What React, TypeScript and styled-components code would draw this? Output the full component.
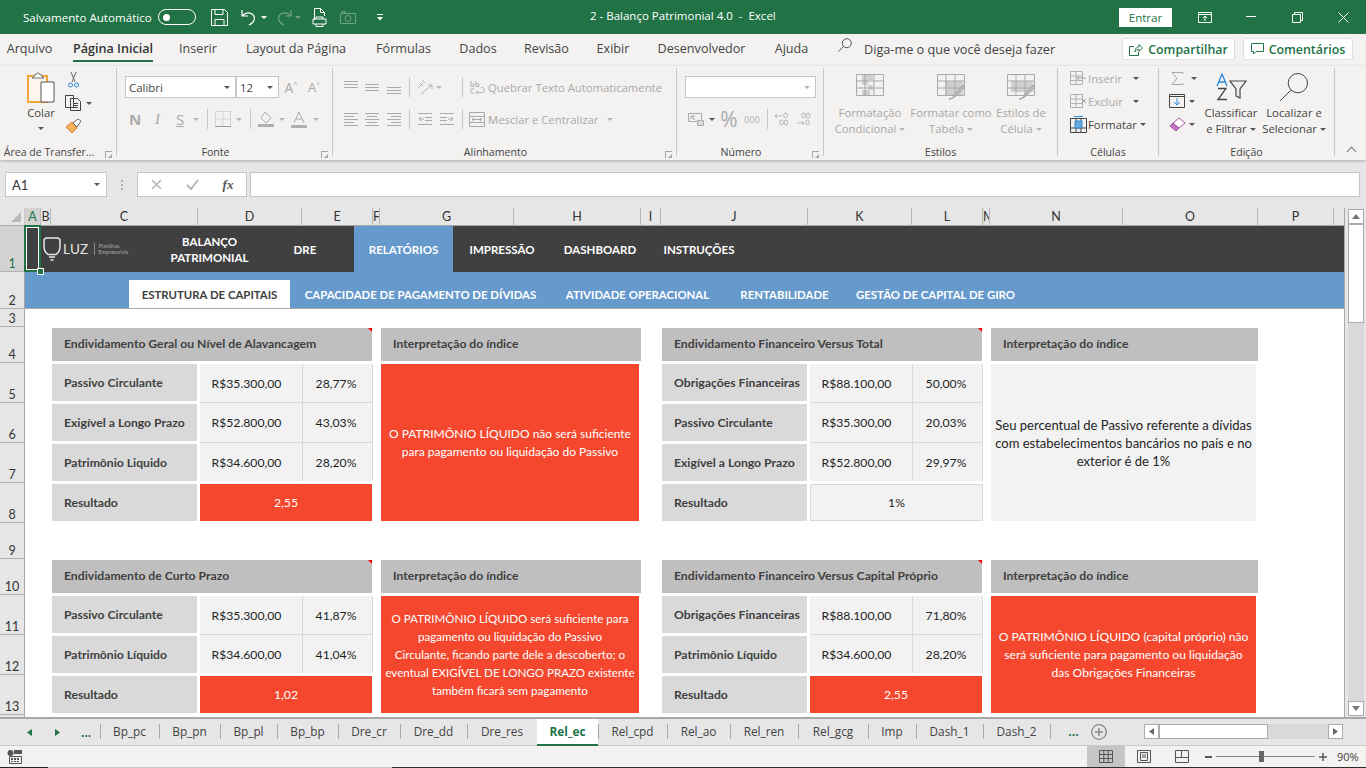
import React from "react";
import styled, { createGlobalStyle } from "styled-components";

const UI = `"Open Sans", "Noto Sans", sans-serif`;
const CELL = `Lato, "Liberation Sans", sans-serif`;

const DARK = "#404040";
const GREEN = "#217346";
const RED = "#f4472e";

const Global = createGlobalStyle`
  html, body { margin: 0; padding: 0; background: #e6e6e6; overflow: hidden; }
  * { box-sizing: border-box; }
  svg { display: block; flex: none; }
`;

const Page = styled.div`
  width: 1366px;
  height: 768px;
  display: flex;
  flex-direction: column;
  overflow: hidden;
  font-family: ${UI};
`;

/* title bar */
const TitleBar = styled.header`
  height: 34px;
  flex: none;
  background: ${GREEN};
  color: #fff;
  display: flex;
  align-items: center;
  position: relative;
  padding-left: 23px;
`;
const AutoSave = styled.span`
  font-size: 11.6px;
  width: 135px;
  white-space: nowrap;
`;
const Toggle = styled.span`
  width: 38px;
  height: 16px;
  border: 1.5px solid #fff;
  border-radius: 8px;
  display: flex;
  align-items: center;
  padding-left: 4px;
  margin-right: 15px;
  &::before {
    content: "";
    width: 7px;
    height: 7px;
    border-radius: 50%;
    background: #fff;
  }
`;
const Slot = styled.span<{ $w: number; $dim?: boolean }>`
  width: ${(p) => p.$w}px;
  flex: none;
  display: flex;
  align-items: center;
  justify-content: center;
  opacity: ${(p) => (p.$dim ? 0.35 : 1)};
`;
const DocTitle = styled.div`
  position: absolute;
  left: 590px;
  top: 8px;
  font-size: 11.5px;
  white-space: pre;
`;
const TitleRight = styled.div`
  margin-left: auto;
  display: flex;
  align-items: center;
`;
const SignIn = styled.button`
  width: 53px;
  height: 19px;
  border: 0;
  padding: 0;
  background: #fff;
  color: ${GREEN};
  font: 11.6px ${UI};
  margin-right: 10px;
`;

/* menu tabs */
const MenuBar = styled.nav`
  height: 32px;
  flex: none;
  background: #f3f2f1;
  display: flex;
  align-items: flex-start;
  padding-top: 4px;
`;
const MenuTab = styled.span<{ $w: number; $on?: boolean }>`
  width: ${(p) => p.$w}px;
  flex: none;
  display: flex;
  justify-content: center;
  font-size: 12.6px;
  line-height: 22px;
  height: 24px;
  color: #444;
  white-space: nowrap;
  & > b {
    font-weight: ${(p) => (p.$on ? 600 : 400)};
    color: ${(p) => (p.$on ? "#333" : "#444")};
    border-bottom: 2px solid ${(p) => (p.$on ? GREEN : "transparent")};
    height: 24px;
  }
`;
const TellMe = styled.span`
  font-size: 12.7px;
  line-height: 22px;
  color: #444;
  margin-left: 12px;
  width: 258px;
  white-space: nowrap;
`;
const ShareBtn = styled.span<{ $w: number }>`
  width: ${(p) => p.$w}px;
  height: 22px;
  flex: none;
  background: #fff;
  border: 1px solid #e1dfdd;
  border-radius: 2px;
  display: flex;
  align-items: center;
  justify-content: center;
  gap: 5px;
  margin-right: 8px;
  color: ${GREEN};
  font-size: 12.4px;
  font-weight: 600;
`;

/* ribbon */
const Ribbon = styled.section`
  height: 94px;
  flex: none;
  background: #f3f2f1;
  display: flex;
  align-items: flex-start;
  padding-top: 2px;
  box-shadow: 0 1px 3px rgba(0, 0, 0, 0.25);
  position: relative;
  z-index: 2;
`;
const Group = styled.div<{ $w: number }>`
  width: ${(p) => p.$w}px;
  height: 88px;
  flex: none;
  border-right: 1px solid #c8c6c4;
  display: flex;
  flex-direction: column;
  position: relative;
`;
const GroupBody = styled.div<{ $left?: number; $top?: number }>`
  flex: 1;
  min-height: 0;
  display: flex;
  flex-direction: column;
  padding-left: ${(p) => p.$left ?? 8}px;
  padding-top: ${(p) => p.$top ?? 8}px;
`;
const Columns = styled(GroupBody)`
  flex-direction: row;
  align-items: flex-start;
`;
const Caption = styled.div<{ $launcher?: boolean }>`
  height: 16px;
  margin-bottom: -4px;
  text-align: center;
  font-size: 10.6px;
  line-height: 16px;
  color: #444;
  white-space: nowrap;
  padding-right: ${(p) => (p.$launcher ? 18 : 0)}px;
`;
const Launcher = styled.span`
  position: absolute;
  right: 4px;
  bottom: -2px;
  width: 7px;
  height: 7px;
  border-left: 1px solid #a8a8a8;
  border-top: 1px solid #a8a8a8;
  &::after {
    content: "";
    position: absolute;
    right: 0;
    bottom: 0;
    border: 2px solid transparent;
    border-right-color: #a8a8a8;
    border-bottom-color: #a8a8a8;
  }
`;
const ToolRow = styled.div<{ $mt?: number; $h?: number }>`
  display: flex;
  align-items: center;
  height: ${(p) => p.$h ?? 22}px;
  margin-top: ${(p) => p.$mt ?? 0}px;
`;
const Stack = styled.div<{ $w?: number }>`
  width: ${(p) => (p.$w ? `${p.$w}px` : "auto")};
  flex: none;
  display: flex;
  flex-direction: column;
`;
const Combo = styled.div<{ $w: number }>`
  width: ${(p) => p.$w}px;
  height: 22px;
  flex: none;
  background: #fff;
  border: 1px solid #c6c6c6;
  display: flex;
  align-items: center;
  padding: 0 5px 0 3px;
  font-family: ${UI};
  font-size: 11.4px;
  color: #444;
  & > span {
    flex: 1;
  }
`;
const Caret = styled.i<{ $light?: boolean; $m?: number; $top?: number }>`
  display: block;
  width: 0;
  height: 0;
  flex: none;
  margin-left: ${(p) => p.$m ?? 0}px;
  margin-top: ${(p) => p.$top ?? 0}px;
  border-left: 3px solid transparent;
  border-right: 3px solid transparent;
  border-top: 3px solid ${(p) => (p.$light ? "#b5b5b5" : "#555")};
`;
const VRule = styled.i<{ $w: number }>`
  width: ${(p) => p.$w}px;
  height: 20px;
  flex: none;
  position: relative;
  &::after {
    content: "";
    position: absolute;
    left: 50%;
    top: 0;
    bottom: 0;
    width: 1px;
    background: #c8c6c4;
  }
`;
const RibbonText = styled.span<{ $off?: boolean }>`
  font-size: 11.3px;
  white-space: nowrap;
  color: ${(p) => (p.$off ? "#a8a8a8" : "#444")};
`;
const BigTool = styled.div<{ $w: number; $off?: boolean }>`
  width: ${(p) => p.$w}px;
  flex: none;
  display: flex;
  flex-direction: column;
  align-items: center;
  color: ${(p) => (p.$off ? "#a8a8a8" : "#444")};
`;
const BigIcon = styled.div<{ $top?: number }>`
  height: 32px;
  margin-top: ${(p) => p.$top ?? 0}px;
  display: flex;
  align-items: center;
  justify-content: center;
`;
const BigLabel = styled.div`
  font-size: 11.3px;
  line-height: 16px;
  margin-top: 2px;
  text-align: center;
  white-space: nowrap;
  & i {
    display: inline-block;
    vertical-align: middle;
    margin-left: 3px;
  }
`;
const GlyphBtn = styled.span<{ $bold?: boolean; $italic?: boolean; $under?: boolean; $size?: number }>`
  font-family: ${(p) => (p.$italic ? `"Liberation Serif", serif` : UI)};
  font-size: ${(p) => p.$size ?? 15}px;
  font-weight: ${(p) => (p.$bold ? 700 : 400)};
  font-style: ${(p) => (p.$italic ? "italic" : "normal")};
  text-decoration: ${(p) => (p.$under ? "underline" : "none")};
  color: #ababab;
`;
const Chevron = styled.span`
  position: absolute;
  right: 11px;
  bottom: 5px;
  width: 7px;
  height: 7px;
  border-left: 1.5px solid #777;
  border-top: 1.5px solid #777;
  transform: rotate(45deg);
`;

/* formula bar */
const FormulaBar = styled.div`
  height: 48px;
  flex: none;
  background: #e6e6e6;
  display: flex;
  padding: 12px 6px 11px 5px;
  align-items: stretch;
`;
const NameBox = styled.div`
  width: 102px;
  background: #fff;
  border: 1px solid #c6c6c6;
  display: flex;
  align-items: center;
  justify-content: space-between;
  padding: 0 6px;
  font-family: ${CELL};
  font-size: 13px;
  color: #333;
`;
const Grip = styled.div`
  width: 30px;
  display: flex;
  flex-direction: column;
  align-items: center;
  justify-content: center;
  gap: 2px;
  & > i {
    width: 2px;
    height: 2px;
    background: #b0b0b0;
  }
`;
const FxBox = styled.div`
  width: 110px;
  background: #fff;
  border: 1px solid #c6c6c6;
  display: flex;
  align-items: center;
`;
const FxText = styled.span`
  font-family: "Liberation Serif", serif;
  font-style: italic;
  font-weight: 700;
  font-size: 13px;
  color: #555;
`;
const FormulaInput = styled.div`
  flex: 1;
  margin-left: 3px;
  background: #fff;
  border: 1px solid #c6c6c6;
`;

/* sheet */
const SheetArea = styled.div`
  height: 509px;
  flex: none;
  display: flex;
`;
const SheetGrid = styled.div`
  width: 1345px;
  height: 509px;
  flex: none;
  display: grid;
  grid-template-columns: 25px 16px 10px 147px 104px 71px 7px 134px 127px 20px 147px 104px 71px 7px 133px 135px 76px 11px;
  grid-template-rows: 18px 46px 37px 18px 36px 40px 40px 40px 40px 36px 36px 40px 40px 40px 40px;
  background: #fff;
  overflow: hidden;
  border-right: 1px solid #a8a8a8;
  position: relative;
`;
const Corner = styled.div`
  grid-column: 1;
  grid-row: 1;
  background: #e6e6e6;
  border-bottom: 1px solid #a8a8a8;
  border-right: 1px solid #c8c8c8;
  position: relative;
  &::after {
    content: "";
    position: absolute;
    right: 3px;
    bottom: 3px;
    border: 5px solid transparent;
    border-right-color: #b9b9b9;
    border-bottom-color: #b9b9b9;
  }
`;
const ColHead = styled.div<{ $c: number; $on?: boolean }>`
  grid-column: ${(p) => p.$c};
  grid-row: 1;
  background: ${(p) => (p.$on ? "#d2d2d2" : "#e6e6e6")};
  color: ${(p) => (p.$on ? GREEN : "#333")};
  border-bottom: 1px solid #a8a8a8;
  border-right: 1px solid #b8b8b8;
  font-family: ${CELL};
  font-size: 12.5px;
  line-height: 18px;
  text-align: center;
  overflow: hidden;
`;
const RowHead = styled.div<{ $r: number; $on?: boolean }>`
  grid-column: 1;
  grid-row: ${(p) => p.$r};
  background: ${(p) => (p.$on ? "#d2d2d2" : "#e6e6e6")};
  color: ${(p) => (p.$on ? GREEN : "#333")};
  border-bottom: 1px solid #b0b0b0;
  border-right: 1px solid #a8a8a8;
  font-family: ${CELL};
  font-size: 12.5px;
  display: flex;
  align-items: flex-end;
  justify-content: center;
  line-height: 15px;
`;
const NavBand = styled.div`
  grid-column: 2 / -1;
  grid-row: 2;
  background: ${DARK};
  display: flex;
  align-items: center;
  font-family: ${CELL};
`;
const Logo = styled.div`
  width: 138px;
  flex: none;
  display: flex;
  align-items: center;
  padding-left: 18px;
  color: #e6e6e6;
`;
const LogoWord = styled.span`
  font-size: 13.5px;
  letter-spacing: 0.3px;
  margin-left: 2px;
`;
const LogoNote = styled.span`
  font-size: 5.4px;
  line-height: 6px;
  color: #a9a9a9;
  border-left: 1px solid #8a8a8a;
  padding-left: 4px;
  margin-left: 5px;
  white-space: nowrap;
`;
const NavItem = styled.div<{ $w: number; $on?: boolean }>`
  width: ${(p) => p.$w}px;
  height: 100%;
  flex: none;
  display: flex;
  align-items: center;
  justify-content: center;
  text-align: center;
  padding-top: 2px;
  background: ${(p) => (p.$on ? "#6699cc" : "transparent")};
  color: #fff;
  font-weight: 700;
  font-size: 11.5px;
  line-height: 16px;
`;
const SubBand = styled.div`
  grid-column: 2 / -1;
  grid-row: 3;
  background: #6699cc;
  border-bottom: 1px solid #a8a8a8;
  display: flex;
  align-items: flex-end;
  padding-left: 104px;
  font-family: ${CELL};
`;
const SubItem = styled.div<{ $w: number; $on?: boolean }>`
  width: ${(p) => p.$w}px;
  height: 28px;
  flex: none;
  display: flex;
  align-items: center;
  justify-content: center;
  background: ${(p) => (p.$on ? "#fff" : "transparent")};
  color: ${(p) => (p.$on ? DARK : "#fff")};
  font-weight: 700;
  font-size: 11.4px;
`;
const Selection = styled.div`
  position: absolute;
  left: 24px;
  top: 17px;
  width: 17px;
  height: 47px;
  border: 2px solid ${GREEN};
  box-shadow: inset 0 0 0 1px #fff;
  &::after {
    content: "";
    position: absolute;
    right: -4px;
    bottom: -4px;
    width: 5px;
    height: 5px;
    background: ${GREEN};
    box-shadow: 0 0 0 1px #fff;
  }
`;

const Cell = styled.div<{ $c: string | number; $r: string | number }>`
  grid-column: ${(p) => p.$c};
  grid-row: ${(p) => p.$r};
  font-family: ${CELL};
  font-size: 12.2px;
  display: flex;
  align-items: center;
  min-width: 0;
`;
const TableTitle = styled(Cell)`
  margin: 1px 1px 2px 1px;
  background: #bfbfbf;
  color: ${DARK};
  font-weight: 700;
  padding: 0 0 2px 12px;
  position: relative;
  white-space: nowrap;
`;
const CommentFlag = styled.i`
  position: absolute;
  right: 0;
  top: 0;
  border: 2px solid transparent;
  border-top-color: #f00;
  border-right-color: #f00;
`;
const InterpTitle = styled(Cell)`
  margin: 1px 0 2px 1px;
  background: #bfbfbf;
  color: ${DARK};
  font-weight: 700;
  padding: 0 0 2px 12px;
  white-space: nowrap;
`;
const RowLabel = styled(Cell)`
  margin: 1px 1px 2px 1px;
  background: #d9d9d9;
  color: ${DARK};
  font-weight: 700;
  padding-left: 12px;
  white-space: nowrap;
`;
const ValueCell = styled(Cell)<{ $first?: boolean; $last?: boolean; $pct?: boolean }>`
  margin: ${(p) => (p.$first ? 1 : 0)}px 0 ${(p) => (p.$last ? 2 : 0)}px ${(p) => (p.$pct ? 0 : 2)}px;
  background: #f2f2f2;
  color: #1f1f1f;
  justify-content: center;
  padding-right: ${(p) => (p.$pct ? 3 : 9)}px;
  border-bottom: ${(p) => (p.$last ? 0 : 1)}px solid #d9d9d9;
  border-left: ${(p) => (p.$pct ? 1 : 0)}px solid #d9d9d9;
  border-right: ${(p) => (p.$pct ? 1 : 0)}px solid #d9d9d9;
`;
const ResultCell = styled(Cell)<{ $bad: boolean }>`
  margin: 1px ${(p) => (p.$bad ? 1 : 0)}px 2px 2px;
  background: ${(p) => (p.$bad ? RED : "#f2f2f2")};
  color: ${(p) => (p.$bad ? "#fff" : "#1f1f1f")};
  justify-content: center;
  border: ${(p) => (p.$bad ? 0 : 1)}px solid #d9d9d9;
`;
const InterpBody = styled(Cell)<{ $bad: boolean; $size: number }>`
  margin: 1px 2px 2px 1px;
  background: ${(p) => (p.$bad ? RED : "#f2f2f2")};
  color: ${(p) => (p.$bad ? "#fff" : "#1f1f1f")};
  justify-content: center;
  text-align: center;
  font-size: ${(p) => p.$size}px;
  line-height: 18px;
  white-space: nowrap;
`;

/* vertical scrollbar */
const VScroll = styled.aside`
  flex: 1;
  background: #e6e6e6;
  padding: 1px 2px 1px 3px;
  display: flex;
  flex-direction: column;
`;
const ScrollBtn = styled.div<{ $h: number; $end?: boolean }>`
  height: ${(p) => p.$h}px;
  flex: none;
  background: #fff;
  border: 1px solid #ababab;
  display: flex;
  align-items: center;
  justify-content: center;
  margin-top: ${(p) => (p.$end ? "auto" : "0")};
`;
const VTrack = styled.div`
  flex: 1;
  background: #d9d9d9;
  display: flex;
  flex-direction: column;
`;

/* sheet tabs */
const TabStrip = styled.div`
  height: 29px;
  flex: none;
  background: #e6e6e6;
  border-top: 2px solid #a8a8a8;
  border-bottom: 1px solid #c8c8c8;
  display: flex;
  align-items: center;
  position: relative;
`;
const TabNav = styled.div`
  width: 100px;
  flex: none;
  display: flex;
  align-items: center;
  color: ${GREEN};
  font-weight: 700;
  font-size: 12px;
`;
const MoreTabs = styled.span`
  color: ${GREEN};
  font-weight: 700;
  font-size: 12px;
  padding-left: 6px;
`;
const SheetTab = styled.div<{ $w: number; $on?: boolean }>`
  width: ${(p) => p.$w}px;
  height: 27px;
  flex: none;
  display: flex;
  align-items: center;
  justify-content: center;
  font-size: 11.8px;
  font-weight: ${(p) => (p.$on ? 700 : 400)};
  color: ${(p) => (p.$on ? GREEN : "#444")};
  background: ${(p) => (p.$on ? "#fff" : "transparent")};
  border-bottom: 2px solid ${(p) => (p.$on ? GREEN : "transparent")};
  position: relative;
  &::before {
    content: "";
    position: absolute;
    left: 0;
    top: 5px;
    bottom: 5px;
    width: 1px;
    background: ${(p) => (p.$on ? "transparent" : "#a8a8a8")};
  }
`;
const HScroll = styled.div`
  position: absolute;
  left: 1144px;
  top: 5px;
  width: 199px;
  height: 15px;
  display: flex;
  background: #d9d9d9;
`;
const HBtn = styled.div<{ $w: number; $end?: boolean }>`
  width: ${(p) => p.$w}px;
  flex: none;
  background: #fff;
  border: 1px solid #ababab;
  margin-left: ${(p) => (p.$end ? "auto" : "0")};
  display: flex;
  align-items: center;
  justify-content: center;
`;

/* status bar */
const StatusBar = styled.footer`
  height: 21px;
  flex: none;
  background: #f3f2f1;
  display: flex;
  align-items: center;
  padding-left: 7px;
`;
const ViewBtn = styled.div<{ $w: number; $on?: boolean }>`
  width: ${(p) => p.$w}px;
  height: 100%;
  flex: none;
  display: flex;
  align-items: center;
  justify-content: center;
  background: ${(p) => (p.$on ? "#c8c6c4" : "transparent")};
`;
const StatusRight = styled.div`
  margin-left: auto;
  height: 100%;
  display: flex;
  align-items: center;
`;
const ZoomTrack = styled.div`
  width: 99px;
  height: 1px;
  background: #8a8a8a;
  position: relative;
`;
const ZoomThumb = styled.i`
  position: absolute;
  left: 43px;
  top: -5px;
  width: 5px;
  height: 11px;
  background: #666;
`;
const ZoomText = styled.span`
  font-size: 11px;
  color: #444;
  width: 36px;
  padding-left: 7px;
`;

const Taskbar = styled.div`
  flex: 1;
  display: flex;
  background: #2b2b2b;
`;
const TaskChunk = styled.i<{ $w: number; $c: string }>`
  width: ${(p) => p.$w}px;
  flex: none;
  background: ${(p) => p.$c};
`;

/* drawings */
const W = "#fff";
const Ln = { fill: "none", strokeWidth: 1 } as const;

const SaveIcon = () => (
  <svg width="17" height="17" viewBox="0 0 17 17" {...Ln} stroke={W}>
    <path d="M.5.5h13l3 3v13H.5zM4 .5v5h8v-5M4 16.5v-6h9v6" />
  </svg>
);
const UndoIcon = ({ flip }: { flip?: boolean }) => (
  <svg width="16" height="17" viewBox="0 0 16 17" fill="none" stroke={W} strokeWidth="1.2" style={flip ? { transform: "scaleX(-1)" } : undefined}>
    <path d="M1 1v6h6M1 7c3-3 7-4 10-2 4 3 3 8-3 11" />
  </svg>
);
const SmallCaret = () => (
  <svg width="6" height="3" viewBox="0 0 6 3">
    <path d="M0 0h6L3 3z" fill="#fff" />
  </svg>
);
const PreviewIcon = () => (
  <svg width="16" height="19" viewBox="0 0 16 19" {...Ln} stroke={W}>
    <path d="M2.5 12V.5h6l4 4V8M8.5.5v4h4M1 11h13v5H1zM4 16v2.500h7V16M4 11V9h7v2" />
  </svg>
);
const CameraIcon = () => (
  <svg width="16" height="13" viewBox="0 0 16 13" {...Ln} stroke={W}>
    <path d="M.5 2.500h15v10H.5zM2 2.500v-2h3v2" />
    <circle cx="8" cy="7.500" r="3" />
  </svg>
);
const CustomIcon = () => (
  <svg width="8" height="7" viewBox="0 0 8 7">
    <path d="M1 0h6v1H1zM1 3h6L4 6.500z" fill="#fff" />
  </svg>
);
const DisplayIcon = () => (
  <svg width="14" height="11" viewBox="0 0 14 11" {...Ln} stroke={W}>
    <path d="M.5.5h13v10H.5zM.5 2.500h13M7 9V4M5 6l2-2 2 2" />
  </svg>
);
const MinIcon = () => (
  <svg width="10" height="2" viewBox="0 0 10 2">
    <path d="M0 .5h10" stroke="#fff" />
  </svg>
);
const RestoreIcon = () => (
  <svg width="11" height="11" viewBox="0 0 11 11" {...Ln} stroke={W}>
    <path d="M.5 2.500h8v8h-8zM2.500 2.500v-2h8v8h-2" />
  </svg>
);
const CloseIcon = () => (
  <svg width="11" height="11" viewBox="0 0 11 11" {...Ln} stroke={W}>
    <path d="M.5.5l10 10M10.500.5l-10 10" />
  </svg>
);
const SearchIcon = ({ size = 14, c = "#555" }: { size?: number; c?: string }) => (
  <svg width={size} height={size} viewBox="0 0 14 14" fill="none" stroke={c} strokeWidth={14 / size}>
    <circle cx="8.800" cy="5.200" r="4.500" />
    <path d="M5.500 8.500L.5 13.500" />
  </svg>
);
const ShareIcon = () => (
  <svg width="14" height="13" viewBox="0 0 14 13" {...Ln} stroke={GREEN}>
    <path d="M5 3.500H.5v9h9V9M6 9c0-4 2-5 4-5V1.500l3.500 3.500L10 8.500V6.500C8 6.500 7 7 6 9z" />
  </svg>
);
const CommentIcon = () => (
  <svg width="13" height="12" viewBox="0 0 13 12" {...Ln} stroke={GREEN}>
    <path d="M.5.5h12v8H5L2.500 11V8.500h-2z" />
  </svg>
);

const PasteIcon = () => (
  <svg width="28" height="31" viewBox="0 0 28 31">
    <path d="M1 4h19v26H1z" fill="#fdf6ec" stroke="#f1a33c" strokeWidth="2" />
    <path d="M7 5V3h2a2 2 0 0 1 4 0h2v2l2 1H5z" fill="#fff" stroke="#777" />
    <path d="M14 10h13v20H14z" fill="#fff" stroke="#555" />
  </svg>
);
const ScissorsIcon = () => (
  <svg width="11" height="16" viewBox="0 0 11 16" fill="none">
    <path d="M3 0l4 10M8 0L4 10" stroke="#666" />
    <circle cx="2.500" cy="13" r="2" stroke="#2b88d8" />
    <circle cx="8.500" cy="13" r="2" stroke="#2b88d8" />
  </svg>
);
const CopyIcon = () => (
  <svg width="17" height="16" viewBox="0 0 17 16" fill="#f3f2f1" stroke="#444">
    <path d="M.5.5h8v12h-8zM5.500 3.500h7l3 3v9h-10z" />
    <path d="M8 8.500h5M8 10.500h5M8 12.500h5" />
  </svg>
);
const BrushIcon = () => (
  <svg width="17" height="16" viewBox="0 0 17 16">
    <path d="M1 9l6-5 5 6-5 5z" fill="#f7b15b" stroke="#d9822b" />
    <path d="M8 5l5-4 3 2-4 6z" fill="#fff" stroke="#666" />
  </svg>
);
const Lines = ({ rows }: { rows: number[][] }) => (
  <svg width="16" height="16" viewBox="0 0 16 16" stroke="#aaa">
    {rows.map(([x1, x2, y]) => (
      <path key={y} d={`M${x1} ${y + 0.5}H${x2}`} />
    ))}
  </svg>
);
const OrientIcon = () => (
  <svg width="17" height="16" viewBox="0 0 17 16" fill="none" stroke="#b5b5b5">
    <path d="M5 15l11-9M16 6h-4M16 6v4" />
    <path d="M2 9l5-5M4 4l3 3M6 1l3 3" />
  </svg>
);
const IndentIcon = ({ flip }: { flip?: boolean }) => (
  <svg width="14" height="12" viewBox="0 0 14 12" fill="none" stroke="#aaa" style={flip ? { transform: "scaleX(-1)" } : undefined}>
    <path d="M0 .5h14M0 11.500h14M7 4.500h7M7 7.500h7M1 6h5M3 4L1 6l2 2" />
  </svg>
);
const WrapIcon = () => (
  <svg width="15" height="15" viewBox="0 0 15 15" fill="none" stroke="#b5b5b5">
    <path d="M1 1v5.500M1 4h3v2.500H1M6 1v5.500h3V4H6M4 9H1v4h3" />
    <path d="M6 12.500h6a2.500 2.500 0 0 0 0-5h-1M8 10.500l-2 2 2 2" />
  </svg>
);
const MergeIcon = () => (
  <svg width="16" height="15" viewBox="0 0 16 15" fill="none" stroke="#aaa">
    <path d="M.5.5h15v14H.5zM.5 4.500h15M.5 10.500h15M3 7.500h10M5 6L3 7.500 5 9M11 6l2 1.500L11 9" />
  </svg>
);
const BordersIcon = () => (
  <svg width="16" height="16" viewBox="0 0 16 16" fill="none" stroke="#bdbdbd" strokeDasharray="1 1">
    <path d="M.5.5h15v15H.5zM8 .5v15M.5 8h15" />
    <path d="M0 15.500h16" stroke="#9a9a9a" strokeDasharray="0" />
  </svg>
);
const FillIcon = () => (
  <svg width="16" height="16" viewBox="0 0 16 16">
    <path d="M7 1l6 6-5 5-5-5z" fill="none" stroke="#aaa" />
    <path d="M0 13h16v3H0z" fill="#b0b0b0" />
  </svg>
);
const ColorA = () => (
  <svg width="16" height="17" viewBox="0 0 16 17">
    <path d="M3 12L8 1l5 11M5 8h6" fill="none" stroke="#aaa" />
    <path d="M0 14h16v3H0z" fill="#b0b0b0" />
  </svg>
);
const CurrencyIcon = () => (
  <svg width="16" height="14" viewBox="0 0 16 14" fill="none" stroke="#aaa">
    <path d="M.5 1.500h13v8H.5zM3 4v3M3 4h2M7 4H5v3h2" />
    <path d="M9.500 8.500h6v5h-6z" fill="#ddd" />
  </svg>
);
const DecimalIcon = ({ grow }: { grow?: boolean }) => (
  <svg width="16" height="15" viewBox="0 0 16 15" fill="none" stroke="#b5b5b5">
    <path d={grow ? "M1 4h7M3 2L1 4l2 2" : "M1 11h7M6 9l2 2-2 2"} />
    <ellipse cx="11.500" cy={grow ? 3.500 : 10.500} rx="1.800" ry="2.500" />
    <ellipse cx="7.500" cy={grow ? 10.500 : 3.500} rx="1.800" ry="2.500" />
    <ellipse cx="12" cy={grow ? 10.500 : 3.500} rx="1.800" ry="2.500" />
  </svg>
);
const StyleGridIcon = ({ variant }: { variant: "cond" | "table" | "cell" }) => (
  <svg width="30" height="26" viewBox="0 0 30 26" fill="none" stroke="#a9a9a9">
    {variant === "cond" && <path d="M7 1h11v5H7zM7 6h6v5H7zM18 11h-5v5h5zM7 16h8v5H7z" fill="#cfcfcf" stroke="none" />}
    {variant === "table" && <path d="M9 7h18v14H9z" fill="#cfcfcf" stroke="none" />}
    {variant === "cell" && <path d="M5 7h22v11H5z" fill="#cfcfcf" stroke="none" />}
    <path d="M1.500 .5h27v21h-27zM1.500 7h27M1.500 14h27M10 .5v21M19 .5v21" />
    {variant !== "cond" && <path d="M13 25c3 0 5-2 6-5l8-9 2 2-9 9c-2 1-4 3-7 3z" fill="#bdbdbd" stroke="#a0a0a0" />}
  </svg>
);
const CellIns = ({ x }: { x?: boolean }) => (
  <svg width="17" height="14" viewBox="0 0 17 14" fill="none" stroke="#b0b0b0">
    <path d="M.5.5h12v13H.5zM.5 5h12M.5 9.500h12M6 .5v13" />
    {x ? <path d="M12 5l4 4M16 5l-4 4" stroke="#a0a0a0" /> : <path d="M16 7H7M9 5L7 7l2 2" stroke="#a0a0a0" />}
  </svg>
);
const FormatIcon = () => (
  <svg width="17" height="17" viewBox="0 0 17 17" fill="none" stroke="#444">
    <path d="M.5 2.500h16v14H.5zM6 2.500v14M11 2.500v14M.5 12h16" />
    <path d="M5 5h7v7H5z" fill="#6aa9dc" stroke="#2b88d8" />
    <path d="M4 .5h9" stroke="#2b88d8" />
  </svg>
);
const SumIcon = () => (
  <svg width="13" height="13" viewBox="0 0 13 13" fill="none" stroke="#a8a8a8">
    <path d="M12 2V.5H1l5 6-5 6h11V11" />
  </svg>
);
const DownFillIcon = () => (
  <svg width="16" height="14" viewBox="0 0 16 14" fill="none">
    <path d="M.5.5h15v13H.5z" stroke="#444" />
    <path d="M.5 2.500h15" stroke="#444" />
    <path d="M8 4v7M5 8l3 3 3-3" stroke="#2b88d8" />
  </svg>
);
const EraserIcon = () => (
  <svg width="17" height="15" viewBox="0 0 17 15">
    <path d="M1 9l6 5 3-3-6-5z" fill="#c776c7" stroke="#a052a0" />
    <path d="M4 6l6-5 6 5-6 5z" fill="#fff" stroke="#a052a0" />
  </svg>
);
const SortIcon = () => (
  <svg width="31" height="28" viewBox="0 0 31 28" fill="none">
    <path d="M1 13L6 1l5 12M3 9h6" stroke="#2b88d8" strokeWidth="1.300" />
    <path d="M2 15.500h8l-8 11h9" stroke="#444" strokeWidth="1.300" />
    <path d="M14 8h16l-6 8v9l-4-2v-7z" stroke="#444" strokeWidth="1.200" />
  </svg>
);
const MacroIcon = () => (
  <svg width="15" height="14" viewBox="0 0 15 14" fill="#555">
    <circle cx="3.500" cy="3" r="3" />
    <path d="M7 0h8v4H7z" />
    <path d="M2.500 6.500h12v7h-12z" fill="none" stroke="#555" />
    <path d="M4 8h2v2H4zM7 8h2v2H7zM10 8h2v2h-2zM4 11h2v1H4zM7 11h2v1H7zM10 11h2v1h-2z" />
  </svg>
);
const ViewGrid = () => (
  <svg width="14" height="13" viewBox="0 0 14 13" fill="none" stroke="#555">
    <path d="M.5.5h13v12H.5zM.5 4.500h13M.5 8.500h13M4.800.5v12M9.200.5v12" />
  </svg>
);
const ViewPage = () => (
  <svg width="14" height="13" viewBox="0 0 14 13" fill="none" stroke="#555">
    <path d="M.5.5h13v12H.5zM3.500 2.500h7v8h-7zM5 5h4M5 7h4" />
  </svg>
);
const ViewBreak = () => (
  <svg width="14" height="13" viewBox="0 0 14 13" fill="none" stroke="#555">
    <path d="M.5.5h13v12H.5zM6.500.5v7H.5M6.500 7.500h7" />
  </svg>
);
const PlusCircle = () => (
  <svg width="16" height="16" viewBox="0 0 16 16" fill="none" stroke="#888">
    <circle cx="8" cy="8" r="7.300" strokeWidth="1.300" />
    <path d="M8 4v8M4 8h8" strokeWidth="1.500" />
  </svg>
);
const Tri = ({ d, c = "#666", w = 5, h = 7 }: { d: string; c?: string; w?: number; h?: number }) => (
  <svg width={w} height={h} viewBox={`0 0 ${w} ${h}`}>
    <path d={d} fill={c} />
  </svg>
);
const BulbLogo = () => (
  <svg width="18" height="26" viewBox="0 0 18 26" fill="none" stroke="#e8e8e8" strokeWidth="1.500">
    <path d="M4 2h10c2 0 3 1 3 3v6c0 4-2 6-4 7.500H5C3 17 1 15 1 11V5c0-2 1-3 3-3z" />
    <path d="M6 21h6M7.500 24h3" />
  </svg>
);

/* data */
const COLS: [string, number, boolean?][] = [
  ["A", 2, true], ["B", 3], ["C", 4], ["D", 5], ["E", 6], ["F", 7], ["G", 8], ["H", 9], ["I", 10],
  ["J", 11], ["K", 12], ["L", 13], ["M", 14], ["N", 15], ["O", 16], ["P", 17], ["", 18],
];
const MENU: [string, number, boolean?][] = [
  ["Arquivo", 59], ["Página Inicial", 108, true], ["Inserir", 62], ["Layout da Página", 134], ["Fórmulas", 81],
  ["Dados", 68], ["Revisão", 69], ["Exibir", 64], ["Desenvolvedor", 113], ["Ajuda", 67],
];

type Row = { label: string; value: string; pct: string };
type Table = {
  title: string;
  col: number;
  rowStart: number;
  rows: Row[];
  result: string;
  resultBad: boolean;
  note: React.ReactNode;
  noteBad: boolean;
  noteSize: number;
};

// rowStart is a grid line: sheet row 5 sits on line 6, because of the column header row
const TABLES: Table[] = [
  {
    title: "Endividamento Geral ou Nível de Alavancagem",
    col: 4,
    rowStart: 6,
    rows: [
      { label: "Passivo Circulante", value: "R$35.300,00", pct: "28,77%" },
      { label: "Exigível a Longo Prazo", value: "R$52.800,00", pct: "43,03%" },
      { label: "Patrimônio Liquido", value: "R$34.600,00", pct: "28,20%" },
    ],
    result: "2,55",
    resultBad: true,
    note: <>O PATRIMÔNIO LÍQUIDO não será suficiente<br />para pagamento ou liquidação do Passivo</>,
    noteBad: true,
    noteSize: 12,
  },
  {
    title: "Endividamento Financeiro Versus Total",
    col: 11,
    rowStart: 6,
    rows: [
      { label: "Obrigações Financeiras", value: "R$88.100,00", pct: "50,00%" },
      { label: "Passivo Circulante", value: "R$35.300,00", pct: "20,03%" },
      { label: "Exigível a Longo Prazo", value: "R$52.800,00", pct: "29,97%" },
    ],
    result: "1%",
    resultBad: false,
    note: <>Seu percentual de Passivo referente a dívidas<br />com estabelecimentos bancários no país e no<br />exterior é de 1%</>,
    noteBad: false,
    noteSize: 13,
  },
  {
    title: "Endividamento de Curto Prazo",
    col: 4,
    rowStart: 12,
    rows: [
      { label: "Passivo Circulante", value: "R$35.300,00", pct: "41,87%" },
      { label: "Patrimônio Líquido", value: "R$34.600,00", pct: "41,04%" },
    ],
    result: "1,02",
    resultBad: true,
    note: <>O PATRIMÔNIO LÍQUIDO será suficiente para<br />pagamento ou liquidação do Passivo<br />Circulante, ficando parte dele a descoberto; o<br />eventual EXIGÍVEL DE LONGO PRAZO existente<br />também ficará sem pagamento</>,
    noteBad: true,
    noteSize: 11.6,
  },
  {
    title: "Endividamento Financeiro Versus Capital Próprio",
    col: 11,
    rowStart: 12,
    rows: [
      { label: "Obrigações Financeiras", value: "R$88.100,00", pct: "71,80%" },
      { label: "Patrimônio Líquido", value: "R$34.600,00", pct: "28,20%" },
    ],
    result: "2,55",
    resultBad: true,
    note: <>O PATRIMÔNIO LÍQUIDO (capital próprio) não<br />será suficiente para pagamento ou liquidação<br />das Obrigações Financeiras</>,
    noteBad: true,
    noteSize: 12.1,
  },
];

const ROW_NUMBERS = [2, 3, 4, 5, 6, 7, 8, 9, 10, 11, 12, 13];

const TABS: [string, number, boolean?][] = [
  ["Bp_pc", 59], ["Bp_pn", 61], ["Bp_pl", 57], ["Bp_bp", 61], ["Dre_cr", 62], ["Dre_dd", 67], ["Dre_res", 70],
  ["Rel_ec", 61, true], ["Rel_cpd", 69], ["Rel_ao", 63], ["Rel_ren", 68], ["Rel_gcg", 70], ["Imp", 48], ["Dash_1", 67], ["Dash_2", 67],
];

function SheetTable({ t }: { t: Table }) {
  const { col, rowStart, rows } = t;
  const resultRow = rowStart + rows.length;
  const noteCol = `${col + 4} / span 2`;
  return (
    <>
      <TableTitle $c={`${col} / span 3`} $r={rowStart - 1}>
        {t.title}
        <CommentFlag />
      </TableTitle>
      <InterpTitle $c={noteCol} $r={rowStart - 1}>Interpretação do índice</InterpTitle>
      {rows.map((r, i) => (
        <React.Fragment key={r.label}>
          <RowLabel $c={col} $r={rowStart + i}>{r.label}</RowLabel>
          <ValueCell $c={col + 1} $r={rowStart + i} $first={i === 0} $last={i === rows.length - 1}>{r.value}</ValueCell>
          <ValueCell $c={col + 2} $r={rowStart + i} $first={i === 0} $last={i === rows.length - 1} $pct>{r.pct}</ValueCell>
        </React.Fragment>
      ))}
      <RowLabel $c={col} $r={resultRow}>Resultado</RowLabel>
      <ResultCell $c={`${col + 1} / span 2`} $r={resultRow} $bad={t.resultBad}>{t.result}</ResultCell>
      <InterpBody $c={noteCol} $r={`${rowStart} / span ${rows.length + 1}`} $bad={t.noteBad} $size={t.noteSize}>
        <span>{t.note}</span>
      </InterpBody>
    </>
  );
}

export default function App() {
  return (
    <Page>
      <Global />
      <TitleBar>
        <AutoSave>Salvamento Automático</AutoSave>
        <Toggle />
        <SaveIcon />
        <Slot $w={13} />
        <UndoIcon />
        <Slot $w={14}><SmallCaret /></Slot>
        <Slot $w={5} />
        <Slot $w={16} $dim><UndoIcon flip /></Slot>
        <Slot $w={12} $dim><SmallCaret /></Slot>
        <Slot $w={8} />
        <PreviewIcon />
        <Slot $w={11} />
        <Slot $w={18} $dim><CameraIcon /></Slot>
        <Slot $w={19} />
        <CustomIcon />
        <DocTitle>2 - Balanço Patrimonial 4.0  -  Excel</DocTitle>
        <TitleRight>
          <SignIn>Entrar</SignIn>
          <Slot $w={46}><DisplayIcon /></Slot>
          <Slot $w={46}><MinIcon /></Slot>
          <Slot $w={46}><RestoreIcon /></Slot>
          <Slot $w={46}><CloseIcon /></Slot>
        </TitleRight>
      </TitleBar>

      <MenuBar>
        {MENU.map(([name, w, on]) => (
          <MenuTab key={name} $w={w} $on={on}><b>{name}</b></MenuTab>
        ))}
        <Slot $w={13} />
        <Slot $w={14}><SearchIcon /></Slot>
        <TellMe>Diga-me o que você deseja fazer</TellMe>
        <ShareBtn $w={113}><ShareIcon />Compartilhar</ShareBtn>
        <ShareBtn $w={110}><CommentIcon />Comentários</ShareBtn>
      </MenuBar>

      <Ribbon>
        <Group $w={117}>
          <Columns $left={18} $top={3}>
            <BigTool $w={46}>
              <BigIcon><PasteIcon /></BigIcon>
              <BigLabel>Colar</BigLabel>
              <Caret $top={6} />
            </BigTool>
            <Stack>
              <ToolRow $h={18}><Slot $w={18}><ScissorsIcon /></Slot></ToolRow>
              <ToolRow $h={18} $mt={5}><Slot $w={18}><CopyIcon /></Slot><Caret $m={4} /></ToolRow>
              <ToolRow $h={18} $mt={5}><Slot $w={18}><BrushIcon /></Slot></ToolRow>
            </Stack>
          </Columns>
          <Caption $launcher>Área de Transfer...</Caption>
          <Launcher />
        </Group>

        <Group $w={216}>
          <GroupBody>
            <ToolRow>
              <Combo $w={111}><span>Calibri</span><Caret /></Combo>
              <Combo $w={43}><span>12</span><Caret /></Combo>
              <Slot $w={24}><GlyphBtn $size={14}>A˄</GlyphBtn></Slot>
              <Slot $w={22}><GlyphBtn $size={13}>A˅</GlyphBtn></Slot>
            </ToolRow>
            <ToolRow $mt={10}>
              <Slot $w={20}><GlyphBtn $bold>N</GlyphBtn></Slot>
              <Slot $w={25}><GlyphBtn $italic>I</GlyphBtn></Slot>
              <Slot $w={20}><GlyphBtn $under>S</GlyphBtn></Slot>
              <Slot $w={12}><Caret $light /></Slot>
              <VRule $w={10} />
              <Slot $w={21}><BordersIcon /></Slot>
              <Slot $w={12}><Caret $light /></Slot>
              <VRule $w={10} />
              <Slot $w={22}><FillIcon /></Slot>
              <Slot $w={10}><Caret $light /></Slot>
              <Slot $w={24}><ColorA /></Slot>
              <Slot $w={10}><Caret $light /></Slot>
            </ToolRow>
          </GroupBody>
          <Caption $launcher>Fonte</Caption>
          <Launcher />
        </Group>

        <Group $w={344}>
          <GroupBody>
            <ToolRow>
              <Slot $w={20}><Lines rows={[[1, 15, 2], [1, 15, 5], [1, 15, 8]]} /></Slot>
              <Slot $w={22}><Lines rows={[[1, 15, 5], [1, 15, 8], [1, 15, 11]]} /></Slot>
              <Slot $w={22}><Lines rows={[[1, 15, 8], [1, 15, 11], [1, 15, 14]]} /></Slot>
              <VRule $w={8} />
              <Slot $w={22}><OrientIcon /></Slot>
              <Slot $w={8}><Caret $light /></Slot>
              <Slot $w={15} />
              <VRule $w={8} />
              <Slot $w={22}><WrapIcon /></Slot>
              <RibbonText $off>Quebrar Texto Automaticamente</RibbonText>
            </ToolRow>
            <ToolRow $mt={10}>
              <Slot $w={20}><Lines rows={[[1, 15, 2], [1, 11, 5], [1, 15, 8], [1, 11, 11], [1, 15, 14]]} /></Slot>
              <Slot $w={22}><Lines rows={[[1, 15, 2], [3, 13, 5], [1, 15, 8], [3, 13, 11], [1, 15, 14]]} /></Slot>
              <Slot $w={22}><Lines rows={[[1, 15, 2], [5, 15, 5], [1, 15, 8], [5, 15, 11], [1, 15, 14]]} /></Slot>
              <VRule $w={8} />
              <Slot $w={23}><IndentIcon /></Slot>
              <Slot $w={22}><IndentIcon flip /></Slot>
              <VRule $w={8} />
              <Slot $w={22}><MergeIcon /></Slot>
              <RibbonText $off>Mesclar e Centralizar</RibbonText>
              <Caret $light $m={9} />
            </ToolRow>
          </GroupBody>
          <Caption $launcher>Alinhamento</Caption>
          <Launcher />
        </Group>

        <Group $w={147}>
          <GroupBody>
            <ToolRow><Combo $w={131}><span /><Caret $light /></Combo></ToolRow>
            <ToolRow $mt={10}>
              <Slot $w={22}><CurrencyIcon /></Slot>
              <Slot $w={10}><Caret /></Slot>
              <Slot $w={24}><GlyphBtn $size={21}>%</GlyphBtn></Slot>
              <Slot $w={22}><GlyphBtn $size={9}>000</GlyphBtn></Slot>
              <VRule $w={8} />
              <Slot $w={21}><DecimalIcon grow /></Slot>
              <Slot $w={24}><DecimalIcon /></Slot>
            </ToolRow>
          </GroupBody>
          <Caption $launcher>Número</Caption>
          <Launcher />
        </Group>

        <Group $w={234}>
          <Columns $left={6} $top={3}>
            <BigTool $w={80} $off>
              <BigIcon><StyleGridIcon variant="cond" /></BigIcon>
              <BigLabel>Formatação<br />Condicional<Caret $light /></BigLabel>
            </BigTool>
            <BigTool $w={82} $off>
              <BigIcon><StyleGridIcon variant="table" /></BigIcon>
              <BigLabel>Formatar como<br />Tabela<Caret $light /></BigLabel>
            </BigTool>
            <BigTool $w={58} $off>
              <BigIcon><StyleGridIcon variant="cell" /></BigIcon>
              <BigLabel>Estilos de<br />Célula<Caret $light /></BigLabel>
            </BigTool>
          </Columns>
          <Caption>Estilos</Caption>
        </Group>

        <Group $w={101}>
          <GroupBody $left={10} $top={0}>
            <ToolRow $mt={-1}><Slot $w={20}><CellIns /></Slot><RibbonText $off>Inserir</RibbonText><Caret $m={11} /></ToolRow>
            <ToolRow $mt={1}><Slot $w={20}><CellIns x /></Slot><RibbonText $off>Excluir</RibbonText><Caret $m={10} /></ToolRow>
            <ToolRow $mt={1}><Slot $w={20}><FormatIcon /></Slot><RibbonText>Formatar</RibbonText><Caret $m={3} /></ToolRow>
          </GroupBody>
          <Caption>Células</Caption>
        </Group>

        <Group $w={176}>
          <Columns $left={7} $top={0}>
            <Stack $w={34}>
              <ToolRow $mt={-1}><Slot $w={22}><SumIcon /></Slot><Caret $m={3} /></ToolRow>
              <ToolRow $mt={1}><Slot $w={22}><DownFillIcon /></Slot><Caret $m={1} /></ToolRow>
              <ToolRow $mt={1}><Slot $w={22}><EraserIcon /></Slot><Caret $m={1} /></ToolRow>
            </Stack>
            <BigTool $w={62}>
              <BigIcon $top={3}><SortIcon /></BigIcon>
              <BigLabel>Classificar<br />e Filtrar<Caret /></BigLabel>
            </BigTool>
            <BigTool $w={64}>
              <BigIcon $top={3}><SearchIcon size={30} c="#444" /></BigIcon>
              <BigLabel>Localizar e<br />Selecionar<Caret /></BigLabel>
            </BigTool>
          </Columns>
          <Caption>Edição</Caption>
        </Group>
        <Chevron />
      </Ribbon>

      <FormulaBar>
        <NameBox>A1<Caret /></NameBox>
        <Grip><i /><i /><i /></Grip>
        <FxBox>
          <Slot $w={36}><svg width="11" height="11" viewBox="0 0 11 11"><path d="M1 1l9 9M10 1l-9 9" stroke="#b5b5b5" strokeWidth="1.500" /></svg></Slot>
          <Slot $w={36}><svg width="13" height="11" viewBox="0 0 13 11"><path d="M1 6l4 4 7-9" fill="none" stroke="#b5b5b5" strokeWidth="2" /></svg></Slot>
          <Slot $w={36}><FxText>fx</FxText></Slot>
        </FxBox>
        <FormulaInput />
      </FormulaBar>

      <SheetArea>
        <SheetGrid>
          <Corner />
          {COLS.map(([name, c, on]) => (
            <ColHead key={c} $c={c} $on={on}>{name}</ColHead>
          ))}
          <RowHead $r={2} $on>1</RowHead>
          {ROW_NUMBERS.map((n) => (
            <RowHead key={n} $r={n + 1}>{n}</RowHead>
          ))}
          <RowHead $r={15} />
          <NavBand>
            <Logo>
              <BulbLogo />
              <LogoWord>LUZ</LogoWord>
              <LogoNote>Planilhas<br />Empresariais</LogoNote>
            </Logo>
            <NavItem $w={93}>BALANÇO<br />PATRIMONIAL</NavItem>
            <NavItem $w={98}>DRE</NavItem>
            <NavItem $w={99} $on>RELATÓRIOS</NavItem>
            <NavItem $w={98}>IMPRESSÃO</NavItem>
            <NavItem $w={98}>DASHBOARD</NavItem>
            <NavItem $w={100}>INSTRUÇÕES</NavItem>
          </NavBand>
          <SubBand>
            <SubItem $w={161} $on>ESTRUTURA DE CAPITAIS</SubItem>
            <SubItem $w={261}>CAPACIDADE DE PAGAMENTO DE DÍVIDAS</SubItem>
            <SubItem $w={173}>ATIVIDADE OPERACIONAL</SubItem>
            <SubItem $w={121}>RENTABILIDADE</SubItem>
            <SubItem $w={181}>GESTÃO DE CAPITAL DE GIRO</SubItem>
          </SubBand>
          {TABLES.map((t) => (
            <SheetTable key={t.title} t={t} />
          ))}
          <Selection />
        </SheetGrid>
        <VScroll>
          <ScrollBtn $h={15}><Tri d="M4 0l4 5H0z" w={8} h={5} c="#777" /></ScrollBtn>
          <VTrack>
            <ScrollBtn $h={99} />
            <ScrollBtn $h={15} $end><Tri d="M0 0h8L4 5z" w={8} h={5} c="#777" /></ScrollBtn>
          </VTrack>
        </VScroll>
      </SheetArea>

      <TabStrip>
        <TabNav>
          <Slot $w={27} />
          <Tri d="M5 0v7L0 3.500z" c={GREEN} />
          <Slot $w={23} />
          <Tri d="M0 0v7l5-3.500z" c={GREEN} />
          <Slot $w={21} />
          <span>...</span>
        </TabNav>
        {TABS.map(([name, w, on]) => (
          <SheetTab key={name} $w={w} $on={on}>{name}</SheetTab>
        ))}
        <SheetTab $w={41}><MoreTabs>...</MoreTabs></SheetTab>
        <PlusCircle />
        <HScroll>
          <HBtn $w={15}><Tri d="M5 0v7L0 3.500z" /></HBtn>
          <HBtn $w={109} />
          <HBtn $w={15} $end><Tri d="M0 0v7l5-3.500z" /></HBtn>
        </HScroll>
      </TabStrip>

      <StatusBar>
        <MacroIcon />
        <StatusRight>
          <ViewBtn $w={38} $on><ViewGrid /></ViewBtn>
          <ViewBtn $w={38}><ViewPage /></ViewBtn>
          <ViewBtn $w={38}><ViewBreak /></ViewBtn>
          <Slot $w={15}><svg width="7" height="2"><path d="M0 1h7" stroke="#555" strokeWidth="2" /></svg></Slot>
          <ZoomTrack><ZoomThumb /></ZoomTrack>
          <Slot $w={15}><svg width="8" height="8"><path d="M0 4h8M4 0v8" stroke="#555" strokeWidth="1.500" /></svg></Slot>
          <ZoomText>90%</ZoomText>
        </StatusRight>
      </StatusBar>

      <Taskbar>
        <TaskChunk $w={48} $c="#222" />
        <TaskChunk $w={344} $c="#c8c8c8" />
      </Taskbar>
    </Page>
  );
}
